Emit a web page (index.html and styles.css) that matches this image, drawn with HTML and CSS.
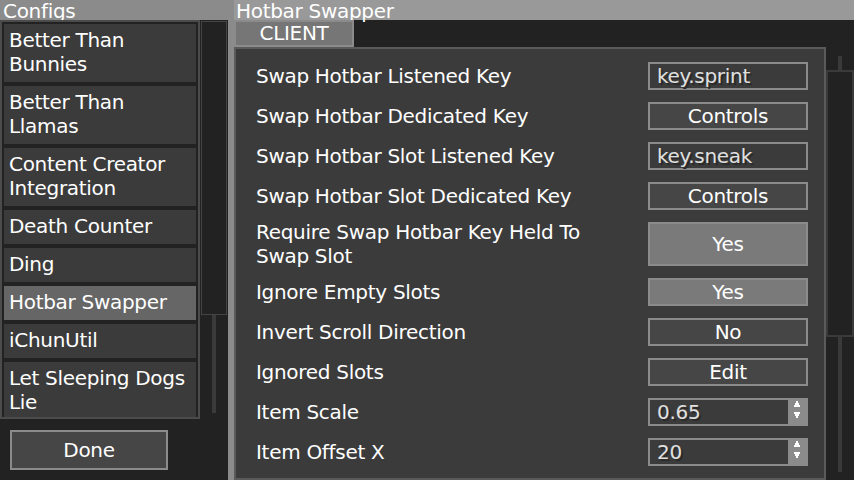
FILE: index.html
```html
<!DOCTYPE html>
<html lang="en">
<head>
    <meta charset="UTF-8">
    <meta name="viewport" content="width=device-width, initial-scale=1.0">
    <title>Configs</title>
    <link rel="stylesheet" href="styles.css">
</head>
<body>
    <div class="screen">
        <aside class="sidebar">
            <div class="title">Configs</div>
            <div class="browser">
                <ul class="mods">
                    <li class="mod">Better Than Bunnies</li>
                    <li class="mod">Better Than Llamas</li>
                    <li class="mod">Content Creator Integration</li>
                    <li class="mod">Death Counter</li>
                    <li class="mod">Ding</li>
                    <li class="mod selected">Hotbar Swapper</li>
                    <li class="mod">iChunUtil</li>
                    <li class="mod">Let Sleeping Dogs Lie</li>
                </ul>
                <div class="scrollbar mods-scroll">
                    <div class="track"></div>
                    <div class="thumb"></div>
                </div>
            </div>
            <div class="actions">
                <button class="btn done">Done</button>
            </div>
        </aside>

        <main class="config">
            <div class="title light">Hotbar Swapper</div>
            <div class="tabs">
                <div class="tab">CLIENT</div>
            </div>
            <div class="body">
                <div class="panel">
                    <div class="row">
                        <span class="label">Swap Hotbar Listened Key</span>
                        <div class="widget field">key.sprint</div>
                    </div>
                    <div class="row">
                        <span class="label">Swap Hotbar Dedicated Key</span>
                        <div class="widget btn">Controls</div>
                    </div>
                    <div class="row">
                        <span class="label">Swap Hotbar Slot Listened Key</span>
                        <div class="widget field">key.sneak</div>
                    </div>
                    <div class="row">
                        <span class="label">Swap Hotbar Slot Dedicated Key</span>
                        <div class="widget btn">Controls</div>
                    </div>
                    <div class="row tall">
                        <span class="label">Require Swap Hotbar Key Held To Swap Slot</span>
                        <div class="widget btn on">Yes</div>
                    </div>
                    <div class="row">
                        <span class="label">Ignore Empty Slots</span>
                        <div class="widget btn on">Yes</div>
                    </div>
                    <div class="row">
                        <span class="label">Invert Scroll Direction</span>
                        <div class="widget btn">No</div>
                    </div>
                    <div class="row">
                        <span class="label">Ignored Slots</span>
                        <div class="widget btn">Edit</div>
                    </div>
                    <div class="row">
                        <span class="label">Item Scale</span>
                        <div class="widget field spin">
                            <span class="value">0.65</span>
                            <span class="arrows">
                                <svg width="6" height="6" viewBox="0 0 6 6"><path d="M2 0h2v2h1v2h1v2H0V4h1V2h1z" fill="#fff"/></svg>
                                <svg width="6" height="6" viewBox="0 0 6 6"><path d="M0 0h6v2H5v2H4v2H2V4H1V2H0z" fill="#fff"/></svg>
                            </span>
                        </div>
                    </div>
                    <div class="row">
                        <span class="label">Item Offset X</span>
                        <div class="widget field spin">
                            <span class="value">20</span>
                            <span class="arrows">
                                <svg width="6" height="6" viewBox="0 0 6 6"><path d="M2 0h2v2h1v2h1v2H0V4h1V2h1z" fill="#fff"/></svg>
                                <svg width="6" height="6" viewBox="0 0 6 6"><path d="M0 0h6v2H5v2H4v2H2V4H1V2H0z" fill="#fff"/></svg>
                            </span>
                        </div>
                    </div>
                </div>
                <div class="scrollbar config-scroll">
                    <div class="track"></div>
                    <div class="thumb"></div>
                </div>
            </div>
        </main>
    </div>
</body>
</html>
```

FILE: styles.css
```css
body {
    margin: 0;
    background-color: #222;
    color: #fff;
    font-family: "DejaVu Sans", sans-serif;
    font-size: 20px;
    letter-spacing: -0.3px;
}
.screen {
    display: flex;
    width: 854px;
    height: 480px;
    overflow: hidden;
}
.sidebar {
    width: 228px;
    border-right: 6px solid #8b8b8b;
    display: flex;
    flex-direction: column;
}
.title {
    height: 20px;
    line-height: 23px;
    padding-left: 3px;
    background-color: #8b8b8b;
    white-space: nowrap;
}
.title.light {
    background-color: #999;
    padding-left: 2px;
}
.browser {
    display: flex;
    height: 399px;
}
.mods {
    list-style: none;
    margin: 0;
    width: 200px;
    box-sizing: border-box;
    border: 2px solid #4b4b4b;
    padding: 2px;
    display: flex;
    flex-direction: column;
    gap: 4px;
    overflow: hidden;
}
.mod {
    flex: none;
    background-color: #3b3b3b;
    padding: 4px 4px 6px 5px;
    line-height: 24px;
}
.mod.selected {
    background-color: #666;
}
.scrollbar {
    position: relative;
    width: 28px;
}
.track {
    position: absolute;
    left: 12px;
    width: 4px;
    background-color: #3a3a3a;
}
.thumb {
    position: absolute;
    box-sizing: border-box;
    background-color: #222;
}
.mods-scroll .track {
    top: 1px;
    height: 392px;
}
.mods-scroll .thumb {
    top: 1px;
    left: 1px;
    width: 26px;
    height: 294px;
    border: 1px solid #444;
}
.config-scroll .track {
    top: 9px;
    height: 416px;
}
.config-scroll .thumb {
    top: 23px;
    left: 0;
    width: 28px;
    height: 267px;
    border: 2px solid #3a3a3a;
}
.actions {
    padding: 11px 0 0 10px;
}
.btn {
    background-color: #464646;
    color: #fff;
    text-align: center;
    font: inherit;
}
.done {
    width: 158px;
    height: 40px;
    border: 2px solid #8b8b8b;
    padding: 0;
    letter-spacing: -0.3px;
}
.config {
    flex: 1;
    display: flex;
    flex-direction: column;
}
.tabs {
    height: 27px;
}
.tab {
    width: 120px;
    height: 27px;
    box-sizing: border-box;
    border: 2px solid #8b8b8b;
    background-color: #767676;
    text-align: center;
    line-height: 23px;
}
.body {
    flex: 1;
    display: flex;
    min-height: 0;
}
.panel {
    width: 592px;
    box-sizing: border-box;
    border: 2px solid #5a5a5a;
    background-color: #3b3b3b;
    padding: 13px 16px 0 20px;
    display: flex;
    flex-direction: column;
    gap: 12px;
    overflow: hidden;
}
.row {
    display: flex;
    align-items: center;
    gap: 24px;
}
.label {
    flex: 1;
    line-height: 24px;
}
.row.tall .label {
    margin: -2px 0;
}
.widget {
    flex: none;
    width: 160px;
    height: 28px;
    box-sizing: border-box;
    border: 2px solid #8b8b8b;
    line-height: 24px;
    white-space: nowrap;
}
.row.tall .widget {
    height: 44px;
    line-height: 40px;
}
.btn.on {
    background-color: #7a7a7a;
}
.field {
    background-color: #3b3b3b;
    padding-left: 7px;
    color: #e0e0e0;
    text-shadow: 2px 2px 0 #2a2a2a;
}
.spin {
    display: flex;
    padding-left: 0;
}
.spin .value {
    flex: 1;
    padding-left: 7px;
}
.arrows {
    width: 18px;
    background-color: #8b8b8b;
    display: flex;
    flex-direction: column;
    align-items: center;
    gap: 5px;
    padding-top: 1px;
    box-sizing: border-box;
}
.arrows svg {
    display: block;
}
```
